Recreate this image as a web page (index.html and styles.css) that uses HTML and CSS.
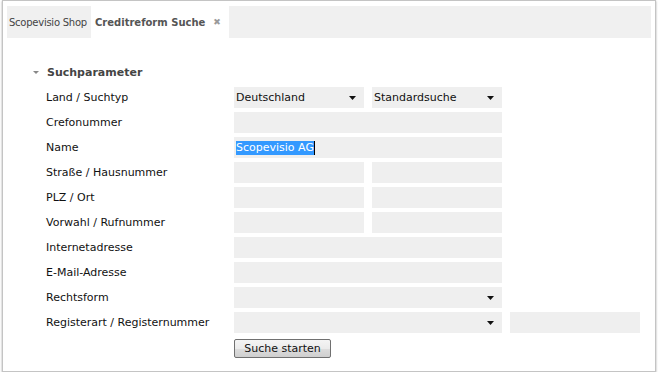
FILE: index.html
```html
<!DOCTYPE html>
<html lang="de">
<head>
  <meta charset="UTF-8">
  <meta name="viewport" content="width=device-width, initial-scale=1.0">
  <title>Creditreform Suche</title>
  <link rel="stylesheet" href="styles.css">
</head>
<body>
  <div class="panel">
    <div class="tab-bar">
      <div class="tab">Scopevisio Shop</div>
      <div class="tab active">Creditreform Suche <span class="tab-close">&#x2716;</span></div>
    </div>

    <div class="section">
      <div class="section-head">
        <span class="toggle"></span>
        <span>Suchparameter</span>
      </div>

      <div class="form-grid">
        <div class="label">Land / Suchtyp</div>
        <div class="field select"><span>Deutschland</span><svg class="arrow" width="7" height="4" viewBox="0 0 7 4"><polygon points="0,0 7,0 3.5,4"/></svg></div>
        <div class="field select"><span>Standardsuche</span><svg class="arrow" width="7" height="4" viewBox="0 0 7 4"><polygon points="0,0 7,0 3.5,4"/></svg></div>
        <div class="spacer"></div>

        <div class="label">Crefonummer</div>
        <div class="field wide"></div>
        <div class="spacer"></div>

        <div class="label">Name</div>
        <div class="field wide"><span class="selected">Scopevisio AG</span><span class="caret"></span></div>
        <div class="spacer"></div>

        <div class="label">Straße / Hausnummer</div>
        <div class="field"></div>
        <div class="field"></div>
        <div class="spacer"></div>

        <div class="label">PLZ / Ort</div>
        <div class="field"></div>
        <div class="field"></div>
        <div class="spacer"></div>

        <div class="label">Vorwahl / Rufnummer</div>
        <div class="field"></div>
        <div class="field"></div>
        <div class="spacer"></div>

        <div class="label">Internetadresse</div>
        <div class="field wide"></div>
        <div class="spacer"></div>

        <div class="label">E-Mail-Adresse</div>
        <div class="field wide"></div>
        <div class="spacer"></div>

        <div class="label">Rechtsform</div>
        <div class="field wide select"><span></span><svg class="arrow" width="7" height="4" viewBox="0 0 7 4"><polygon points="0,0 7,0 3.5,4"/></svg></div>
        <div class="spacer"></div>

        <div class="label">Registerart / Registernummer</div>
        <div class="field wide select"><span></span><svg class="arrow" width="7" height="4" viewBox="0 0 7 4"><polygon points="0,0 7,0 3.5,4"/></svg></div>
        <div class="field"></div>

        <div class="label"></div>
        <div class="button-cell"><button class="search-button">Suche starten</button></div>
      </div>
    </div>
  </div>
</body>
</html>
```

FILE: styles.css
```css
body {
  margin: 0;
  padding: 0;
  background-color: #ffffff;
  font-family: "DejaVu Sans", Verdana, sans-serif;
}

.panel {
  box-sizing: border-box;
  margin: 0 2px;
  height: 372px;
  border: 1px solid #c4c4c4;
  background-color: #ffffff;
  box-shadow: 0 1px 2px rgba(0, 0, 0, 0.35);
  padding: 5px 4px 0;
}

/* Reiter oben */
.tab-bar {
  display: flex;
  height: 32px;
  background-color: #f0f0f0;
}

.tab {
  display: flex;
  align-items: center;
  box-sizing: border-box;
  width: 84px;
  padding: 0 2px;
  font-size: 10px;
  letter-spacing: -0.25px;
  color: #444444;
  white-space: nowrap;
}

.tab.active {
  width: 138px;
  padding: 0 4px;
  background-color: #ffffff;
  font-size: 10px;
  letter-spacing: 0;
  font-weight: bold;
  color: #555555;
}

.tab-close {
  margin-left: 8px;
  font-size: 9px;
  color: #9a9a9a;
}

/* Suchparameter */
.section {
  padding: 24px 0 0 26px;
}

.section-head {
  display: flex;
  align-items: center;
  height: 20px;
  font-size: 11px;
  font-weight: bold;
  color: #444444;
  margin-bottom: 5px;
}

.toggle {
  width: 0;
  height: 0;
  border-left: 3px solid transparent;
  border-right: 3px solid transparent;
  border-top: 3px solid #888888;
  margin-right: 8px;
}

.form-grid {
  display: grid;
  grid-template-columns: 180px 130px 130px 130px;
  grid-auto-rows: 21px;
  column-gap: 8px;
  row-gap: 4px;
  margin-left: 13px;
}

.label {
  font-size: 11px;
  line-height: 21px;
  color: #111111;
  white-space: nowrap;
}

.field {
  background-color: #efefef;
  font-size: 11px;
  line-height: 21px;
  color: #111111;
  padding: 0 2px;
  display: flex;
  align-items: center;
}

.field.wide {
  grid-column: span 2;
}

.field.select {
  justify-content: space-between;
  padding-right: 8px;
}

.arrow {
  fill: #111111;
}

.spacer {
  grid-column: span 1;
}

.selected {
  background-color: #3399ff;
  color: #ffffff;
  line-height: 14px;
}

.caret {
  width: 1px;
  height: 14px;
  background-color: #000000;
  margin-right: auto;
}

.button-cell {
  grid-column: span 2;
}

.search-button {
  height: 19px;
  width: 97px;
  padding: 0;
  font-family: "DejaVu Sans", Verdana, sans-serif;
  font-size: 11px;
  color: #111111;
  border: 1px solid #707070;
  border-radius: 2px;
  background: linear-gradient(#f4f4f4, #ebebeb 50%, #dddddd 51%, #cfcfcf);
  cursor: pointer;
}
```
